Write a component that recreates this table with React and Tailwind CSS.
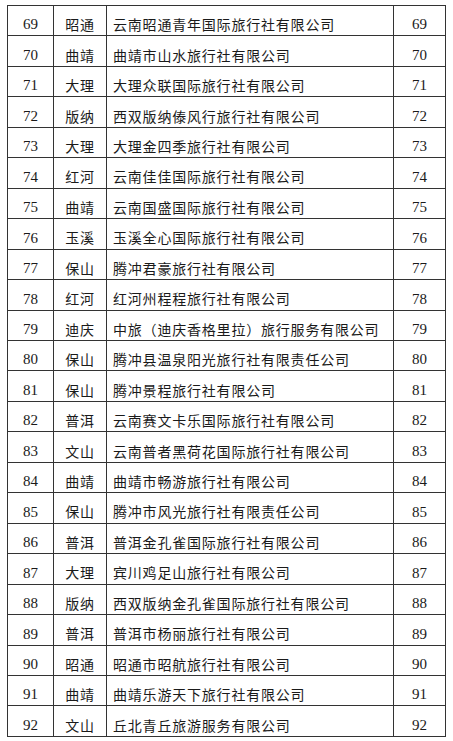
const rows = [
  [69, '昭通', '云南昭通青年国际旅行社有限公司'],
  [70, '曲靖', '曲靖市山水旅行社有限公司'],
  [71, '大理', '大理众联国际旅行社有限公司'],
  [72, '版纳', '西双版纳傣风行旅行社有限公司'],
  [73, '大理', '大理金四季旅行社有限公司'],
  [74, '红河', '云南佳佳国际旅行社有限公司'],
  [75, '曲靖', '云南国盛国际旅行社有限公司'],
  [76, '玉溪', '玉溪全心国际旅行社有限公司'],
  [77, '保山', '腾冲君豪旅行社有限公司'],
  [78, '红河', '红河州程程旅行社有限公司'],
  [79, '迪庆', '中旅（迪庆香格里拉）旅行服务有限公司'],
  [80, '保山', '腾冲县温泉阳光旅行社有限责任公司'],
  [81, '保山', '腾冲景程旅行社有限公司'],
  [82, '普洱', '云南赛文卡乐国际旅行社有限公司'],
  [83, '文山', '云南普者黑荷花国际旅行社有限公司'],
  [84, '曲靖', '曲靖市畅游旅行社有限公司'],
  [85, '保山', '腾冲市风光旅行社有限责任公司'],
  [86, '普洱', '普洱金孔雀国际旅行社有限公司'],
  [87, '大理', '宾川鸡足山旅行社有限公司'],
  [88, '版纳', '西双版纳金孔雀国际旅行社有限公司'],
  [89, '普洱', '普洱市杨丽旅行社有限公司'],
  [90, '昭通', '昭通市昭航旅行社有限公司'],
  [91, '曲靖', '曲靖乐游天下旅行社有限公司'],
  [92, '文山', '丘北青丘旅游服务有限公司'],
]

const serif = "font-['Liberation_Serif','Times_New_Roman',serif]"
const cjk = "font-['Noto_Sans_CJK_SC','Noto_Sans',sans-serif]"

function App() {
  return (
    <div className="w-[453px] h-[741px] bg-white pt-[5px] pl-[7px] text-[#1a1a1a]">
      <div className="w-[439px] border-t border-l border-[#333]">
        {rows.map(([no, city, name]) => (
          <div key={no} className="flex h-[30.46px] border-b border-[#333]">
            <div className={`w-[46px] shrink-0 border-r border-[#333] flex items-center justify-center pt-[8px] text-[15px] ${serif}`}>
              {no}
            </div>
            <div className={`w-[53px] shrink-0 border-r border-[#333] flex items-center justify-center pt-[8px] text-[14px] tracking-[0.8px] ${cjk}`}>
              {city}
            </div>
            <div className={`w-[287px] shrink-0 border-r border-[#333] flex items-center pl-[6px] pt-[8px] text-[14px] tracking-[0.8px] whitespace-nowrap ${cjk}`}>
              {name}
            </div>
            <div className={`flex-1 border-r border-[#333] flex items-center justify-center pt-[8px] text-[15px] ${serif}`}>
              {no}
            </div>
          </div>
        ))}
      </div>
    </div>
  )
}

export default App
